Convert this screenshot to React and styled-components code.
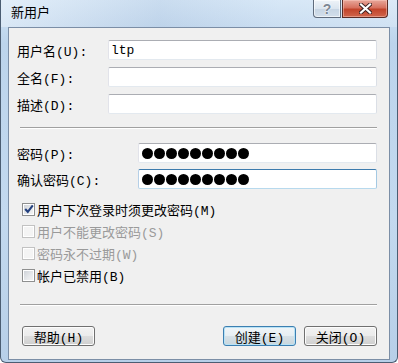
import React from 'react';
import styled, { createGlobalStyle, css } from 'styled-components';

const GlobalStyle = createGlobalStyle`
  body {
    margin: 0;
    background: #fff;
  }
`;

const FONT = `"Liberation Mono", "Noto Sans CJK SC", monospace`;

const fields = [
  { label: '用户名(U):', value: 'ltp' },
  { label: '全名(F):', value: '' },
  { label: '描述(D):', value: '' },
];

const passwords = [
  { label: '密码(P):', focused: false },
  { label: '确认密码(C):', focused: true },
];

const options = [
  { label: '用户下次登录时须更改密码(M)', checked: true, disabled: false },
  { label: '用户不能更改密码(S)', checked: false, disabled: true },
  { label: '密码永不过期(W)', checked: false, disabled: true },
  { label: '帐户已禁用(B)', checked: false, disabled: false },
];

const App = () => (
  <>
    <GlobalStyle />
    <Window>
      <TitleBar>
        <Title>新用户</Title>
        <Controls>
          <HelpButton>?</HelpButton>
          <CloseButton>
            <svg width="13" height="11" viewBox="0 0 13 11">
              <path d="M2 1.5 L11 9.5 M11 1.5 L2 9.5" stroke="#3a2020" strokeWidth="4" strokeLinecap="square" />
              <path d="M2 1.5 L11 9.5 M11 1.5 L2 9.5" stroke="#fff" strokeWidth="2.2" strokeLinecap="square" />
            </svg>
          </CloseButton>
        </Controls>
      </TitleBar>
      <Content>
        <Group $gap={7}>
          {fields.map((f) => (
            <FieldRow key={f.label} $labelWidth={91}>
              <Label>{f.label}</Label>
              <TextBox>{f.value}</TextBox>
            </FieldRow>
          ))}
        </Group>
        <Separator $top={13} />
        <Group $gap={6} $top={14}>
          {passwords.map((p) => (
            <FieldRow key={p.label} $labelWidth={121}>
              <Label>{p.label}</Label>
              <TextBox $focused={p.focused}>
                <Dots>
                  {Array.from({ length: 9 }).map((_, i) => (
                    <Dot key={i} />
                  ))}
                </Dots>
              </TextBox>
            </FieldRow>
          ))}
        </Group>
        <Options>
          {options.map((o) => (
            <Option key={o.label} $disabled={o.disabled}>
              <Box $disabled={o.disabled}>
                {o.checked && (
                  <svg width="10" height="10" viewBox="0 0 10 10">
                    <path d="M1.2 5 L3.8 7.8 L8.8 1.4" fill="none" stroke="#23407e" strokeWidth="2.1" />
                  </svg>
                )}
              </Box>
              {o.label}
            </Option>
          ))}
        </Options>
        <Separator $top={18} />
        <ButtonRow>
          <Button>帮助(H)</Button>
          <ButtonGroup>
            <Button $default>创建(E)</Button>
            <Button>关闭(O)</Button>
          </ButtonGroup>
        </ButtonRow>
      </Content>
    </Window>
  </>
);

const Window = styled.div`
  width: 398px;
  height: 363px;
  box-sizing: border-box;
  display: flex;
  flex-direction: column;
  border: 1px solid #4b5d72;
  border-top: 0;
  border-radius: 0 0 6px 6px;
  background: linear-gradient(to bottom, #d3e5f6 0%, #bcd4ec 12%, #c3d9ef 60%, #b7cfe8 100%);
  font-family: ${FONT};
  font-size: 13px;
  color: #000;
`;

const TitleBar = styled.div`
  height: 27px;
  display: flex;
  justify-content: space-between;
  align-items: flex-start;
  padding: 0 9px 0 10px;
  background: linear-gradient(to right, rgba(255,255,255,0.35), rgba(150,170,200,0.15) 40%, rgba(255,255,255,0.1) 70%, rgba(255,255,255,0.2));
`;

const Title = styled.div`
  line-height: 28px;
  font-size: 13px;
`;

const Controls = styled.div`
  display: flex;
  gap: 1px;
`;

const capButton = css`
  height: 18px;
  box-sizing: border-box;
  display: flex;
  align-items: center;
  justify-content: center;
  border: 1px solid #5f6b7c;
  border-top: 0;
`;

const HelpButton = styled.div`
  ${capButton};
  width: 28px;
  border-radius: 0 0 0 4px;
  background: linear-gradient(to bottom, #eef3f8 0%, #dbe5ef 50%, #c6d4e3 51%, #d3dfeb 100%);
  box-shadow: inset 0 0 0 1px rgba(255,255,255,0.6);
  font-family: "Liberation Sans", sans-serif;
  font-weight: bold;
  font-size: 14px;
  color: #7c8794;
  text-shadow: 0 0 1px #fff, 0 0 2px #fff;
`;

const CloseButton = styled.div`
  ${capButton};
  width: 46px;
  border-color: #5b2b25;
  border-radius: 0 0 4px 0;
  background: linear-gradient(to bottom, #e8a89b 0%, #d7715f 45%, #c2442b 55%, #d0664c 100%);
  box-shadow: inset 0 0 0 1px rgba(255,210,200,0.45);
`;

const Content = styled.div`
  flex: 1;
  margin: 0 7px 2px;
  border: 1px solid #7b8ea6;
  background: #f0f0f0;
  padding: 12px 12px 0 8px;
  display: flex;
  flex-direction: column;
`;

const Group = styled.div`
  display: flex;
  flex-direction: column;
  gap: ${(p) => p.$gap}px;
  margin-top: ${(p) => p.$top || 0}px;
`;

const FieldRow = styled.div`
  display: grid;
  grid-template-columns: ${(p) => p.$labelWidth}px 1fr;
  align-items: center;
  height: 20px;
`;

const Label = styled.div`
  white-space: nowrap;
`;

const TextBox = styled.div`
  height: 20px;
  box-sizing: border-box;
  display: flex;
  align-items: center;
  padding-left: 2px;
  background: #fff;
  border: 1px solid;
  border-radius: 2px;
  border-color: #abadb3 #dbdfe6 #e3e9ef #e2e3ea;
  ${(p) =>
    p.$focused &&
    css`
      border-color: #3d7bad #a4c9e3 #b7d9ed #b5cfe7;
    `}
`;

const Dots = styled.div`
  display: flex;
  gap: 1px;
  padding-left: 1px;
`;

const Dot = styled.span`
  width: 11px;
  height: 11px;
  border-radius: 50%;
  background: #000;
`;

const Separator = styled.div`
  margin: ${(p) => p.$top}px 0 0 3px;
  border-top: 1px solid #a0a0a0;
  border-bottom: 1px solid #fff;
`;

const Options = styled.div`
  display: flex;
  flex-direction: column;
  margin: 9px 0 0 5px;
`;

const Option = styled.div`
  height: 22px;
  display: flex;
  align-items: center;
  gap: 2px;
  color: ${(p) => (p.$disabled ? '#9a9a9a' : '#000')};
`;

const Box = styled.span`
  width: 13px;
  height: 13px;
  box-sizing: border-box;
  display: flex;
  align-items: center;
  justify-content: center;
  border: 1px solid ${(p) => (p.$disabled ? '#c2c2c2' : '#8e8f8f')};
  background: ${(p) =>
    p.$disabled
      ? '#f4f4f4'
      : 'linear-gradient(135deg, #cbcfd5 0%, #e6e8eb 55%, #f6f6f6 100%)'};
  box-shadow: inset 0 0 0 1px #fff;
`;

const ButtonRow = styled.div`
  display: flex;
  justify-content: space-between;
  margin: 20px 0 0 5px;
`;

const ButtonGroup = styled.div`
  display: flex;
  gap: 8px;
`;

const Button = styled.div`
  width: 73px;
  height: 20px;
  box-sizing: border-box;
  display: flex;
  align-items: center;
  justify-content: center;
  border: 1px solid #707070;
  border-radius: 3px;
  background: linear-gradient(to bottom, #f2f2f2 0%, #ebebeb 50%, #dddddd 51%, #cfcfcf 100%);
  box-shadow: inset 0 0 0 1px #fcfcfc;
  white-space: nowrap;
  ${(p) =>
    p.$default &&
    css`
      border-color: #3c7fb1;
      background: linear-gradient(to bottom, #f0f5f8 0%, #e6eef2 50%, #d6e1e7 51%, #c9d6dd 100%);
      box-shadow: inset 0 0 0 1px #b8e2f5;
    `}
`;

export default App;
